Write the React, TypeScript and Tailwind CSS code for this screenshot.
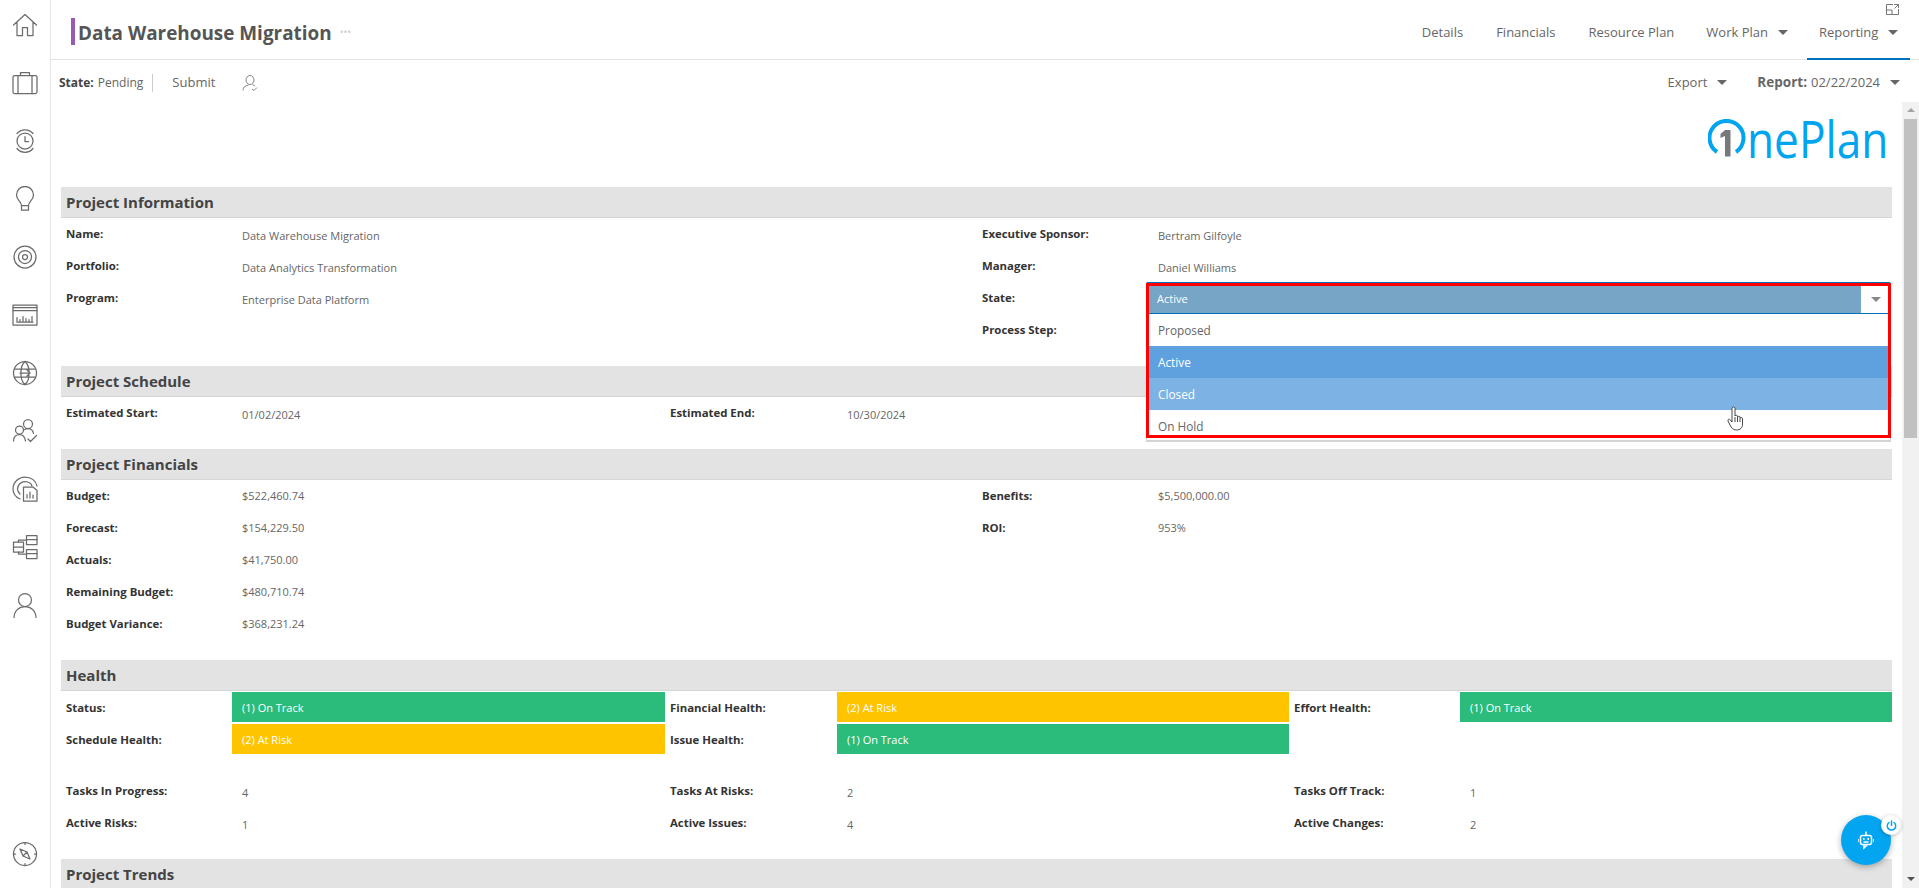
const Caret = ({ className = "border-t-[#666]" }: { className?: string }) => (
  <span className={`inline-block h-0 w-0 border-x-[5px] border-t-[5px] border-x-transparent ${className}`} />
);

const Ico = ({ children }: { children: React.ReactNode }) => (
  <svg width="26" height="26" viewBox="0 0 26 26" fill="none" stroke="#6b6b6b" strokeWidth="1.25" strokeLinecap="round" strokeLinejoin="round">
    {children}
  </svg>
);

const navIcons = [
  <Ico key="home">
    <path d="M1.500 13L13 2.500L24.500 13M5 10.500V23.500H10.500V15.500H15.500V23.500H21V10.500" />
  </Ico>,
  <Ico key="case">
    <rect x="1" y="5.500" width="24" height="18" rx="1.500" />
    <path d="M8.500 5.500V2.500H17.500V5.500M6 5.500V23.500M20 5.500V23.500" />
  </Ico>,
  <Ico key="clock">
    <circle cx="13" cy="13" r="8" />
    <path d="M13 8.500V13.500H16.500M5 5.500C9 .5 17 .5 21 5.500M5 20.500C9 25.500 17 25.500 21 20.500" />
  </Ico>,
  <Ico key="bulb">
    <path d="M9.500 19.500C9.500 16 4.500 14 4.500 9A8.500 8.500 0 0 1 21.500 9C21.500 14 16.500 16 16.500 19.500ZM9.500 19.500V24H16.500V19.500" />
  </Ico>,
  <Ico key="target">
    <circle cx="13" cy="13" r="11" />
    <circle cx="13" cy="13" r="6.500" />
    <circle cx="13" cy="13" r="2.500" />
  </Ico>,
  <Ico key="chart">
    <rect x="1" y="3" width="24" height="20" />
    <path d="M1 5.500H25M1 8.500H25M5 20V15.500M8 20V17.500M11 20V14.500M14 20V16.500M17 20V17.500M20 20V14.500M5 20H21" />
  </Ico>,
  <Ico key="globe">
    <circle cx="13" cy="13" r="11.500" />
    <path d="M13 1.500C7.500 6 7.500 20 13 24.500M13 1.500C18.500 6 18.500 20 13 24.500M2.500 9H23.500M2.500 17H23.500M8 13H18M15 10L18 13L15 16" />
  </Ico>,
  <Ico key="people">
    <circle cx="16" cy="6" r="4.500" />
    <circle cx="7.500" cy="12" r="4" />
    <path d="M1.500 23C1.500 19 4 16.500 7.500 16.500S13 19 13.500 23M12.500 11.500C14 10.500 15 10.500 16 10.500 19 10.500 21 12.500 21.500 15.500M16 21L18.500 23.500L24.500 17.500" />
  </Ico>,
  <Ico key="report">
    <path d="M8 23C3.500 21 1 17 1 13 1 6.500 6.500 1 13 1S24 5 25 10M8 18C6.500 16.500 5.500 15 5.500 13 5.500 9 9 5.500 13 5.500S19.500 8 20 10" />
    <path d="M11.500 11H21L25 14.500V25H11.500ZM15 22V18.500M18 22V16M21 22V19" />
  </Ico>,
  <Ico key="flow">
    <rect x="1.500" y="8" width="10" height="10" />
    <rect x="14.500" y="1.500" width="10.500" height="9" />
    <rect x="14.500" y="15.500" width="10.500" height="9" />
    <path d="M1.500 13H11.500M11.500 6H14.500M11.500 20H14.500M14.500 5.500H25M14.500 19.500H25M6.500 8V6H11.500M6.500 18V20H11.500" />
  </Ico>,
  <Ico key="user">
    <circle cx="13" cy="8" r="6.500" />
    <path d="M2 26C2 19 7 14.500 13 14.500S24 19 24 26" />
  </Ico>,
];

const Compass = () => (
  <Ico>
    <circle cx="13" cy="13" r="11.500" />
    <path d="M8 8L15 11L18 18L11 15ZM11 15L15 11" />
    <path d="M13 1.500V3.500M13 22.500V24.500M1.500 13H3.500M22.500 13H24.500" />
  </Ico>
);

const Logo = () => (
  <div className="flex items-end font-['Open_Sans',sans-serif] text-[52px] leading-[38px] text-[#00a4ef]">
    <svg width="38" height="38" viewBox="0 0 38 38" fill="none" className="mr-px">
      <path d="M9 33A17 17 0 1 1 28 33" stroke="#00a4ef" strokeWidth="4" />
      <path d="M17 11H22.500V37.500H17V17L12.500 19V15Z" fill="#77787b" />
    </svg>
    <span className="block w-[140px] whitespace-nowrap">
      <span className="inline-block origin-left scale-x-[0.85]">nePlan</span>
    </span>
  </div>
);

const Label = ({ children }: { children: React.ReactNode }) => (
  <div className="h-8 pl-[5px] pt-[5px] text-[11.4px] leading-[22px] font-bold text-[#333]">{children}</div>
);

const Value = ({ children }: { children?: React.ReactNode }) => (
  <div className="h-8 pl-[10px] pt-[7px] text-[11px] leading-[22px] text-[#666]">{children}</div>
);

// the money and count rows sit a bit higher than the text rows
const Num = ({ children }: { children?: React.ReactNode }) => (
  <div className="h-8 pl-[10px] pt-[5px] text-[11px] leading-[22px] text-[#666]">{children}</div>
);

const Section = ({ title }: { title: string }) => (
  <div className="h-[31px] border-b border-[#d6d6d6] bg-[#e3e3e3] pl-[5px] text-[15px] leading-[30px] font-bold text-[#444]">
    {title}
  </div>
);

const Badge = ({ color, children }: { color: string; children: React.ReactNode }) => (
  <div className={`mb-[2px] h-[30px] pl-[10px] text-[11px] leading-[31px] text-white ${color}`}>{children}</div>
);

export default function App() {
  return (
    <div className="flex h-[893px] w-[1919px] overflow-hidden bg-white pb-[5px] font-['Open_Sans',sans-serif]">
      <aside className="flex w-[51px] flex-col items-center border-r border-[#e4e4e4] pr-[1px] pt-[12px] pb-[21px]">
        <div className="flex flex-col gap-[32px]">{navIcons}</div>
        <div className="mt-auto">
          <Compass />
        </div>
      </aside>

      <main className="relative flex min-w-0 flex-1 flex-col">
        <header className="relative flex h-[60px] shrink-0 items-center justify-between border-b border-[#e2e2e2] pl-[20px]">
          <div className="mt-[4px] flex items-center">
            <span className="h-[27px] w-[4px] bg-[#9b59b6]" />
            <h1 className="ml-[3px] mt-[3px] text-[18.9px] font-bold text-[#555]">Data Warehouse Migration</h1>
            <span className="ml-[8px] mt-[2px] text-[10px] leading-none text-[#ccc]">•••</span>
          </div>
          <nav className="flex h-full items-center pr-[9px] pt-[6px] text-[13px] text-[#666]">
            <a className="mr-[33px]">Details</a>
            <a className="mr-[33px]">Financials</a>
            <a className="mr-[32px]">Resource Plan</a>
            <a className="mr-[19px] flex items-center gap-[10px]">Work Plan <Caret /></a>
            <a className="relative flex h-full w-[103px] items-center gap-[10px] pl-[12px]">
              Reporting <Caret />
              <span className="absolute inset-x-0 bottom-[-1px] h-[2px] bg-[#0072bc]" />
            </a>
          </nav>
          <svg className="absolute right-[20px] top-[4px]" width="13" height="11" viewBox="0 0 13 11" fill="none" stroke="#777">
            <path d="M12.500 5V10.500H.5V.5H7M.5 6H6V10.500M8 .5H12.500V4M12.500 .5L8.500 4.500" />
          </svg>
        </header>

        <div className="flex h-[42px] shrink-0 items-center justify-between pl-[8px] pr-[19px] pt-[3px] text-[12px] text-[#666]">
          <div className="flex items-center">
            <b className="font-bold text-[#444]">State:</b>
            <span className="ml-[4px] border-r border-[#ccc] pr-[9px]">Pending</span>
            <span className="ml-[19px] text-[13px]">Submit</span>
            <svg className="ml-[27px]" width="16" height="16" viewBox="0 0 16 16" fill="none" stroke="#777" strokeWidth="0.9">
              <ellipse cx="8" cy="5" rx="4" ry="4.500" />
              <path d="M1 15.500C1 12.500 3 10.500 6.500 10M10 14L12 15.500L15 12.500M10.500 9.500L13 11" />
            </svg>
          </div>
          <div className="flex items-center text-[13px]">
            <span>Export</span>
            <Caret className="ml-[10px] border-t-[#666]" />
            <b className="ml-[30px] text-[13.5px] font-bold">Report:</b>
            <span className="ml-[4px]">02/22/2024</span>
            <Caret className="ml-[10px] border-t-[#666]" />
          </div>
        </div>

        <div className="flex min-h-0 flex-1 overflow-hidden">
          <div className="relative min-w-0 flex-1 overflow-hidden pl-[10px] pr-[10px]">
            <div className="flex h-[85px] items-start justify-end pr-[5px] pt-[17px]">
              <Logo />
            </div>

            <Section title="Project Information" />
            <div className="grid grid-cols-[171px_745px_171px_1fr]">
              <Label>Name:</Label><Value>Data Warehouse Migration</Value>
              <Label>Executive Sponsor:</Label><Value>Bertram Gilfoyle</Value>
              <Label>Portfolio:</Label><Value>Data Analytics Transformation</Value>
              <Label>Manager:</Label><Value>Daniel Williams</Value>
              <Label>Program:</Label><Value>Enterprise Data Platform</Value>
              <Label>State:</Label><Value />
              <div /><div />
              <Label>Process Step:</Label><Value />
            </div>
            <div className="h-[20px]" />

            <Section title="Project Schedule" />
            <div className="grid grid-cols-[171px_433px_172px_452px_171px_1fr]">
              <Label>Estimated Start:</Label><Value>01/02/2024</Value>
              <Label>Estimated End:</Label><Value>10/30/2024</Value>
            </div>
            <div className="h-[20px]" />

            <Section title="Project Financials" />
            <div className="grid grid-cols-[171px_745px_171px_1fr]">
              <Label>Budget:</Label><Num>$522,460.74</Num>
              <Label>Benefits:</Label><Num>$5,500,000.00</Num>
              <Label>Forecast:</Label><Num>$154,229.50</Num>
              <Label>ROI:</Label><Num>953%</Num>
              <Label>Actuals:</Label><Num>$41,750.00</Num><div /><div />
              <Label>Remaining Budget:</Label><Num>$480,710.74</Num><div /><div />
              <Label>Budget Variance:</Label><Num>$368,231.24</Num><div /><div />
            </div>
            <div className="h-[20px]" />

            <Section title="Health" />
            <div className="mt-px grid grid-cols-[171px_433px_172px_452px_171px_1fr]">
              <Label>Status:</Label><Badge color="bg-[#2bbb7b]">(1) On Track</Badge>
              <Label>Financial Health:</Label><Badge color="bg-[#ffc400]">(2) At Risk</Badge>
              <Label>Effort Health:</Label><Badge color="bg-[#2bbb7b]">(1) On Track</Badge>
              <Label>Schedule Health:</Label><Badge color="bg-[#ffc400]">(2) At Risk</Badge>
              <Label>Issue Health:</Label><Badge color="bg-[#2bbb7b]">(1) On Track</Badge>
              <div /><div />
            </div>
            <div className="h-[19px]" />
            <div className="grid grid-cols-[171px_433px_172px_452px_171px_1fr]">
              <Label>Tasks In Progress:</Label><Value>4</Value>
              <Label>Tasks At Risks:</Label><Value>2</Value>
              <Label>Tasks Off Track:</Label><Value>1</Value>
              <Label>Active Risks:</Label><Value>1</Value>
              <Label>Active Issues:</Label><Value>4</Value>
              <Label>Active Changes:</Label><Value>2</Value>
            </div>
            <div className="h-[20px]" />

            <Section title="Project Trends" />

            {/* open state dropdown */}
            <div className="absolute left-[1095px] top-[180px] h-[160px] w-[745px] overflow-hidden border-x border-b-2 border-[#d4d4d4] bg-white">
              <div className="h-[4px] border-t border-[#0072bc]" />
              <div className="flex h-[27px] items-center justify-between bg-[#76a5c6] pl-[10px] text-[11px] text-white">
                Active
                <span className="flex h-full w-[29px] items-center justify-center bg-white">
                  <Caret className="border-t-[#888]" />
                </span>
              </div>
              <div className="h-px bg-[#0072bc]" />
              <div className="h-[32px] pl-[11px] text-[11.8px] leading-[32px] text-[#666]">Proposed</div>
              <div className="h-[32px] bg-[#5ea1de] pl-[11px] text-[11.8px] leading-[32px] text-white">Active</div>
              <div className="h-[32px] bg-[#7db3e4] pl-[11px] text-[11.8px] leading-[32px] text-white">Closed</div>
              <div className="h-[32px] pl-[11px] text-[11.8px] leading-[32px] text-[#666]">On Hold</div>
            </div>
            <div className="absolute left-[1095px] top-[181px] h-[155px] w-[745px] border-[3px] border-[#ff0000]" />
            {/* hand cursor */}
            <svg className="absolute left-[1675px] top-[304px]" width="20" height="25" viewBox="0 0 18 25" fill="#fff" stroke="#333" strokeWidth="0.9" strokeLinejoin="round">
              <path d="M5 2.500C5 .5 8 .5 8 2.500V10C8 9 10.500 9 10.500 10.500V11C10.500 10 13 10 13 11.500V12C13 11 15.500 11 15.500 13V18C15.500 22 13 24 9.500 24 6 24 4.500 22 3 19L1 15C.5 13 2.500 12.500 3.500 14L5 16Z" />
              <path d="M8 11V16M10.500 11V16M13 12V16" />
            </svg>
          </div>

          <div className="flex w-[17px] shrink-0 flex-col items-center bg-[#f1f1f1]">
            <div className="mt-[6px] h-0 w-0 border-x-[4px] border-b-[4px] border-x-transparent border-b-[#a3a3a3]" />
            <div className="mt-[7px] h-[319px] w-[13px] bg-[#c1c1c1]" />
            <div className="mb-[7px] mt-auto h-0 w-0 border-x-[4px] border-t-[4px] border-x-transparent border-t-[#505050]" />
          </div>
        </div>

        {/* chat bot button */}
        <button className="absolute left-[1790px] top-[815px] flex h-[50px] w-[50px] items-center justify-center rounded-full bg-[#03a5f0] shadow-[0_2px_6px_rgba(0,0,0,0.3)]">
          <svg width="16" height="19" viewBox="0 0 16 19" fill="none" stroke="#fff" strokeWidth="1.500">
            <path d="M8 .5V4" />
            <rect x="2.500" y="4.500" width="11" height="9" rx="2" />
            <path d="M0 8V11M16 8V11M5.500 11H10.500M6 13.500V17L9 14" />
            <path d="M5 8H6.500M9.500 8H11" strokeWidth="2" />
          </svg>
          <span className="absolute -right-[10px] top-0 flex h-5 w-5 items-center justify-center rounded-full bg-white shadow-[0_1px_4px_rgba(0,0,0,0.25)]">
            <svg width="11" height="11" viewBox="0 0 11 11" fill="none" stroke="#03a5f0" strokeWidth="1.500" strokeLinecap="round">
              <path d="M5.500 1V5.500M3 2.500A4.200 4.200 0 1 0 8 2.500" />
            </svg>
          </span>
        </button>
      </main>
    </div>
  );
}
